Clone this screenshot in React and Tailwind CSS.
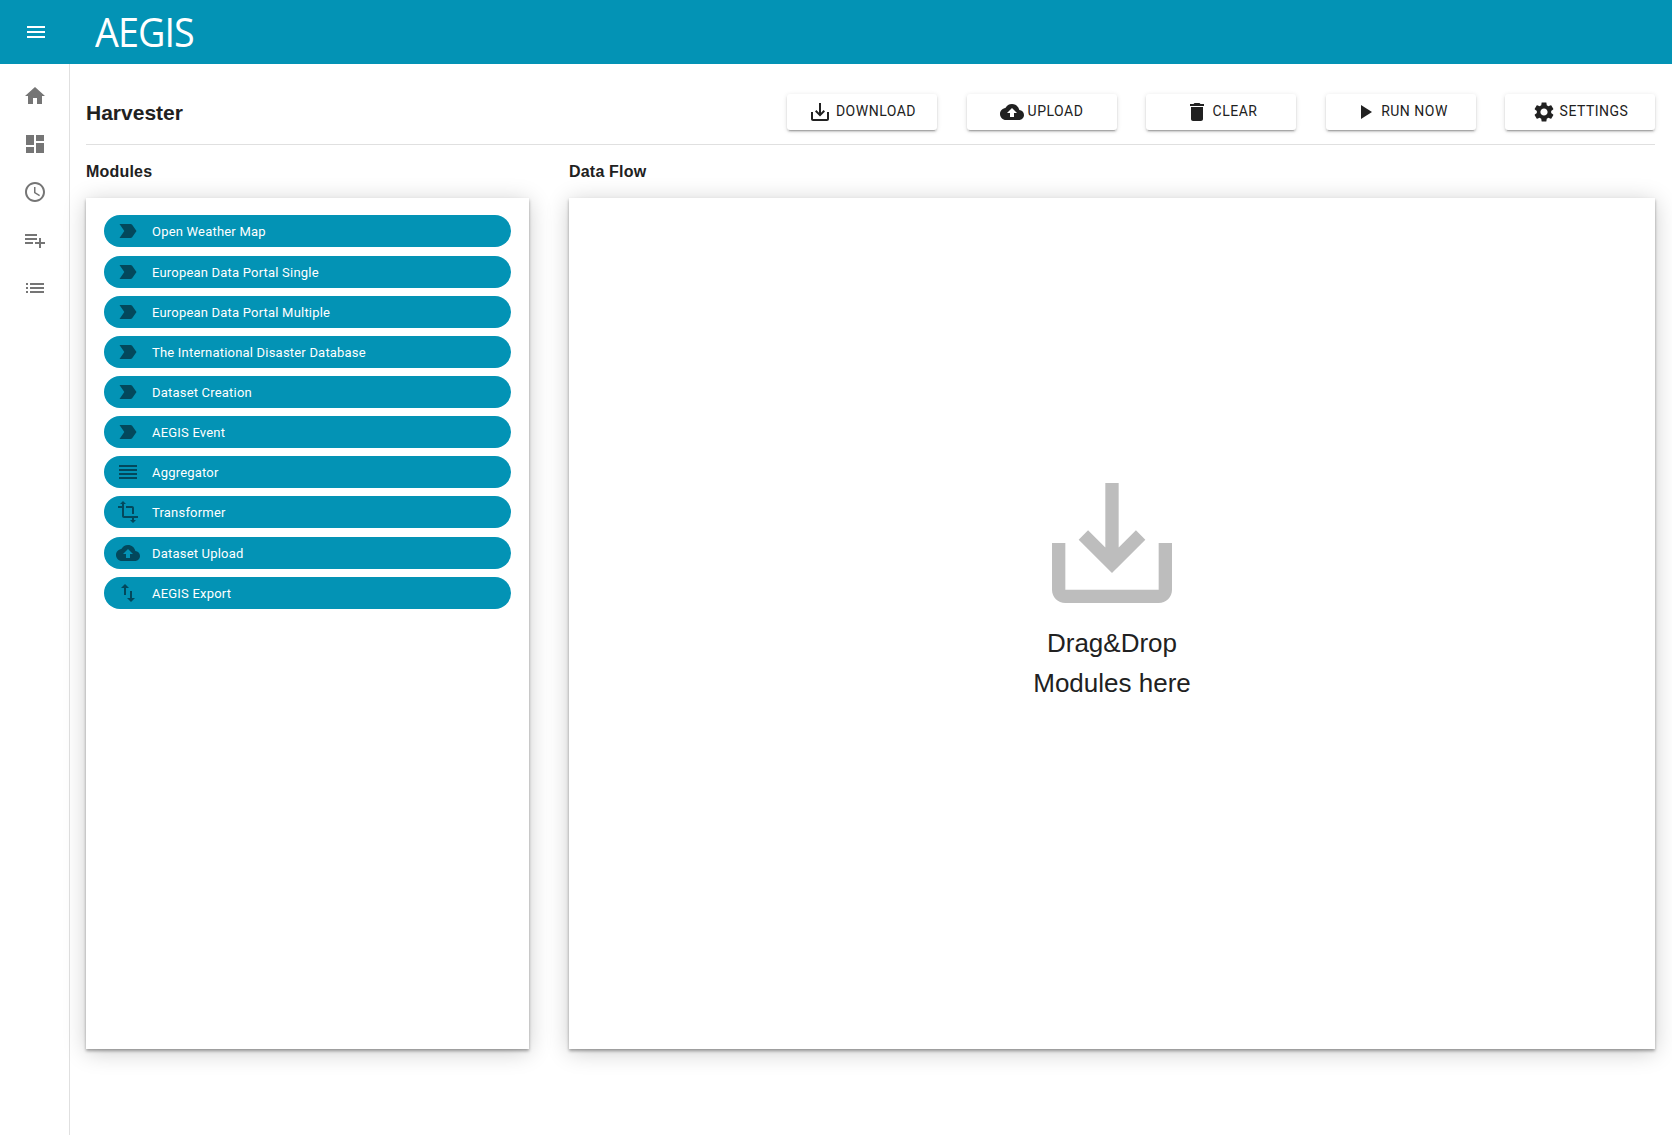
const ICONS = {
  menu: 'M3 18h18v-2H3v2zm0-5h18v-2H3v2zm0-7v2h18V6H3z',
  home: 'M10 20v-6h4v6h5v-8h3L12 3 2 12h3v8z',
  dashboard: 'M3 13h8V3H3v10zm0 8h8v-6H3v6zm10 0h8V11h-8v10zm0-18v6h8V3h-8z',
  schedule: 'M11.99 2C6.47 2 2 6.48 2 12s4.47 10 9.99 10C17.52 22 22 17.52 22 12S17.52 2 11.99 2zM12 20c-4.42 0-8-3.58-8-8s3.58-8 8-8 8 3.58 8 8-3.58 8-8 8zm.5-13H11v6l5.25 3.15.75-1.23-4.5-2.67z',
  playlistAdd: 'M14 10H2v2h12v-2zm0-4H2v2h12V6zm4 8v-4h-2v4h-4v2h4v4h2v-4h4v-2h-4zM2 16h8v-2H2v2z',
  list: 'M3 13h2v-2H3v2zm0 4h2v-2H3v2zm0-8h2V7H3v2zm4 4h14v-2H7v2zm0 4h14v-2H7v2zM7 7v2h14V7H7z',
  saveAlt: 'M19 12v7H5v-7H3v7c0 1.1.9 2 2 2h14c1.1 0 2-.9 2-2v-7h-2zm-6 .67l2.59-2.58L17 11.5l-5 5-5-5 1.41-1.41L11 12.67V3h2z',
  upload: 'M19.35 10.04C18.67 6.59 15.64 4 12 4 9.11 4 6.6 5.64 5.35 8.04 2.34 8.36 0 10.91 0 14c0 3.31 2.69 6 6 6h13c2.76 0 5-2.24 5-5 0-2.64-2.05-4.78-4.65-4.96zM14 13v4h-4v-4H7l5-5 5 5h-3z',
  trash: 'M6 19c0 1.1.9 2 2 2h8c1.1 0 2-.9 2-2V7H6v12zM19 4h-3.5l-1-1h-5l-1 1H5v2h14V4z',
  play: 'M8 5v14l11-7z',
  settings: 'M19.14 12.94c.04-.3.06-.61.06-.94 0-.32-.02-.64-.07-.94l2.03-1.58c.18-.14.23-.41.12-.61l-1.92-3.32c-.12-.22-.37-.29-.59-.22l-2.39.96c-.5-.38-1.03-.7-1.62-.94l-.36-2.54c-.04-.24-.24-.41-.48-.41h-3.84c-.24 0-.43.17-.47.41l-.36 2.54c-.59.24-1.13.57-1.62.94l-2.39-.96c-.22-.08-.47 0-.59.22L2.74 8.87c-.12.21-.08.47.12.61l2.03 1.58c-.05.3-.09.63-.09.94s.02.64.07.94l-2.03 1.58c-.18.14-.23.41-.12.61l1.92 3.32c.12.22.37.29.59.22l2.39-.96c.5.38 1.03.7 1.62.94l.36 2.54c.05.24.24.41.48.41h3.84c.24 0 .44-.17.47-.41l.36-2.54c.59-.24 1.13-.56 1.62-.94l2.39.96c.22.08.47 0 .59-.22l1.92-3.32c.12-.22.07-.47-.12-.61l-2.01-1.58zM12 15.6c-1.98 0-3.6-1.62-3.6-3.6s1.62-3.6 3.6-3.6 3.6 1.62 3.6 3.6-1.62 3.6-3.6 3.6z',
  label: 'M3.5 18.99l11 .01c.67 0 1.27-.33 1.63-.84L20.5 12l-4.37-6.16c-.36-.51-.96-.84-1.63-.84l-11 .01L8.34 12 3.5 18.99z',
  reorder: 'M3 15h18v-2H3v2zm0 4h18v-2H3v2zm0-8h18V9H3v2zm0-6v2h18V5H3z',
  transform: 'M22 18v-2H8V4h2L7 1 4 4h2v2H2v2h4v8c0 1.1.9 2 2 2h8v2h-2l3 3 3-3h-2v-2h4zM10 8h6v6h2V8c0-1.1-.9-2-2-2h-6v2z',
  importExport: 'M9 3L5 6.99h3V14h2V6.99h3L9 3zm7 14.01V10h-2v7.01h-3L15 21l4-3.99h-3z',
}

const NAV = ['home', 'dashboard', 'schedule', 'playlistAdd', 'list']

const ACTIONS = [
  { label: 'DOWNLOAD', icon: 'saveAlt' },
  { label: 'UPLOAD', icon: 'upload' },
  { label: 'CLEAR', icon: 'trash' },
  { label: 'RUN NOW', icon: 'play' },
  { label: 'SETTINGS', icon: 'settings' },
]

const MODULES = [
  { label: 'Open Weather Map', icon: 'label', extra: 'mb-[9px]' },
  { label: 'European Data Portal Single', icon: 'label' },
  { label: 'European Data Portal Multiple', icon: 'label' },
  { label: 'The International Disaster Database', icon: 'label' },
  { label: 'Dataset Creation', icon: 'label' },
  { label: 'AEGIS Event', icon: 'label' },
  { label: 'Aggregator', icon: 'reorder' },
  { label: 'Transformer', icon: 'transform', extra: 'mb-[9px]' },
  { label: 'Dataset Upload', icon: 'upload' },
  { label: 'AEGIS Export', icon: 'importExport' },
]

function Icon({ name, className }) {
  return (
    <svg viewBox="0 0 24 24" fill="currentColor" className={className}>
      <path d={ICONS[name]} />
    </svg>
  )
}

const panelShadow = 'shadow-[0_2px_3px_rgba(0,0,0,0.35),0_3px_22px_rgba(0,0,0,0.2)]'

export default function App() {
  return (
    <div className="min-h-screen flex flex-col bg-white text-[#212121] font-['Liberation_Sans',sans-serif]">
      <header className="h-16 bg-[#0393b5] flex items-center text-white">
        <Icon name="menu" className="w-6 h-6 ml-6" />
        <span className="ml-[47px] mb-[2px] text-[41px] leading-none font-normal font-['Open_Sans',sans-serif] tracking-[-1px] origin-left scale-x-[0.92]">AEGIS</span>
      </header>

      <div className="flex flex-1">
        <nav className="w-[70px] shrink-0 border-r border-[#e0e0e0] pt-2 flex flex-col items-center text-[#757575]">
          {NAV.map(n => (
            <div key={n} className="h-12 flex items-center justify-center">
              <Icon name={n} className="w-6 h-6" />
            </div>
          ))}
        </nav>

        <main className="flex-1 pl-4 pr-[17px]">
          <div className="h-[81px] flex items-center justify-between border-b border-[#e0e0e0] pt-[30px] pb-[15px]">
            <h1 className="text-[21px] font-bold leading-none mt-[2px]">Harvester</h1>
            <div className="flex gap-[29.5px]">
              {ACTIONS.map(a => (
                <button key={a.label} className="w-[150px] h-9 bg-white rounded-[3px] flex items-center justify-center gap-1 text-sm tracking-[0.5px] font-['Roboto',sans-serif] shadow-[0_3px_1px_-2px_rgba(0,0,0,0.2),0_2px_2px_0_rgba(0,0,0,0.14),0_1px_5px_0_rgba(0,0,0,0.12)]">
                  <Icon name={a.icon} className="w-6 h-6" />
                  <span className="pb-[2px]">{a.label}</span>
                </button>
              ))}
            </div>
          </div>

          <div className="flex gap-10 pt-[17px]">
            <section className="w-[443px] shrink-0">
              <h2 className="text-base font-bold leading-5 tracking-[0.2px] mb-4">Modules</h2>
              <div className={`h-[851px] bg-white pt-[17px] px-[18px] ${panelShadow}`}>
                {MODULES.map(m => (
                  <div key={m.label} className={`h-8 mb-2 rounded-2xl bg-[#0393b5] flex items-center pl-3 gap-3 text-white text-[13px] font-['Roboto',sans-serif] tracking-[0.2px] ${m.extra || ''}`}>
                    <Icon name={m.icon} className="w-6 h-6 text-[#03485c]" />
                    <span className="pt-[2px]">{m.label}</span>
                  </div>
                ))}
              </div>
            </section>

            <section className="flex-1">
              <h2 className="text-base font-bold leading-5 tracking-[0.2px] mb-4">Data Flow</h2>
              <div className={`h-[851px] bg-white pt-[265px] flex flex-col items-center ${panelShadow}`}>
                <Icon name="saveAlt" className="w-40 h-40 text-[#bdbdbd]" />
                <p className="text-[26px] leading-10 text-center">Drag&amp;Drop<br />Modules here</p>
              </div>
            </section>
          </div>
        </main>
      </div>
    </div>
  )
}
